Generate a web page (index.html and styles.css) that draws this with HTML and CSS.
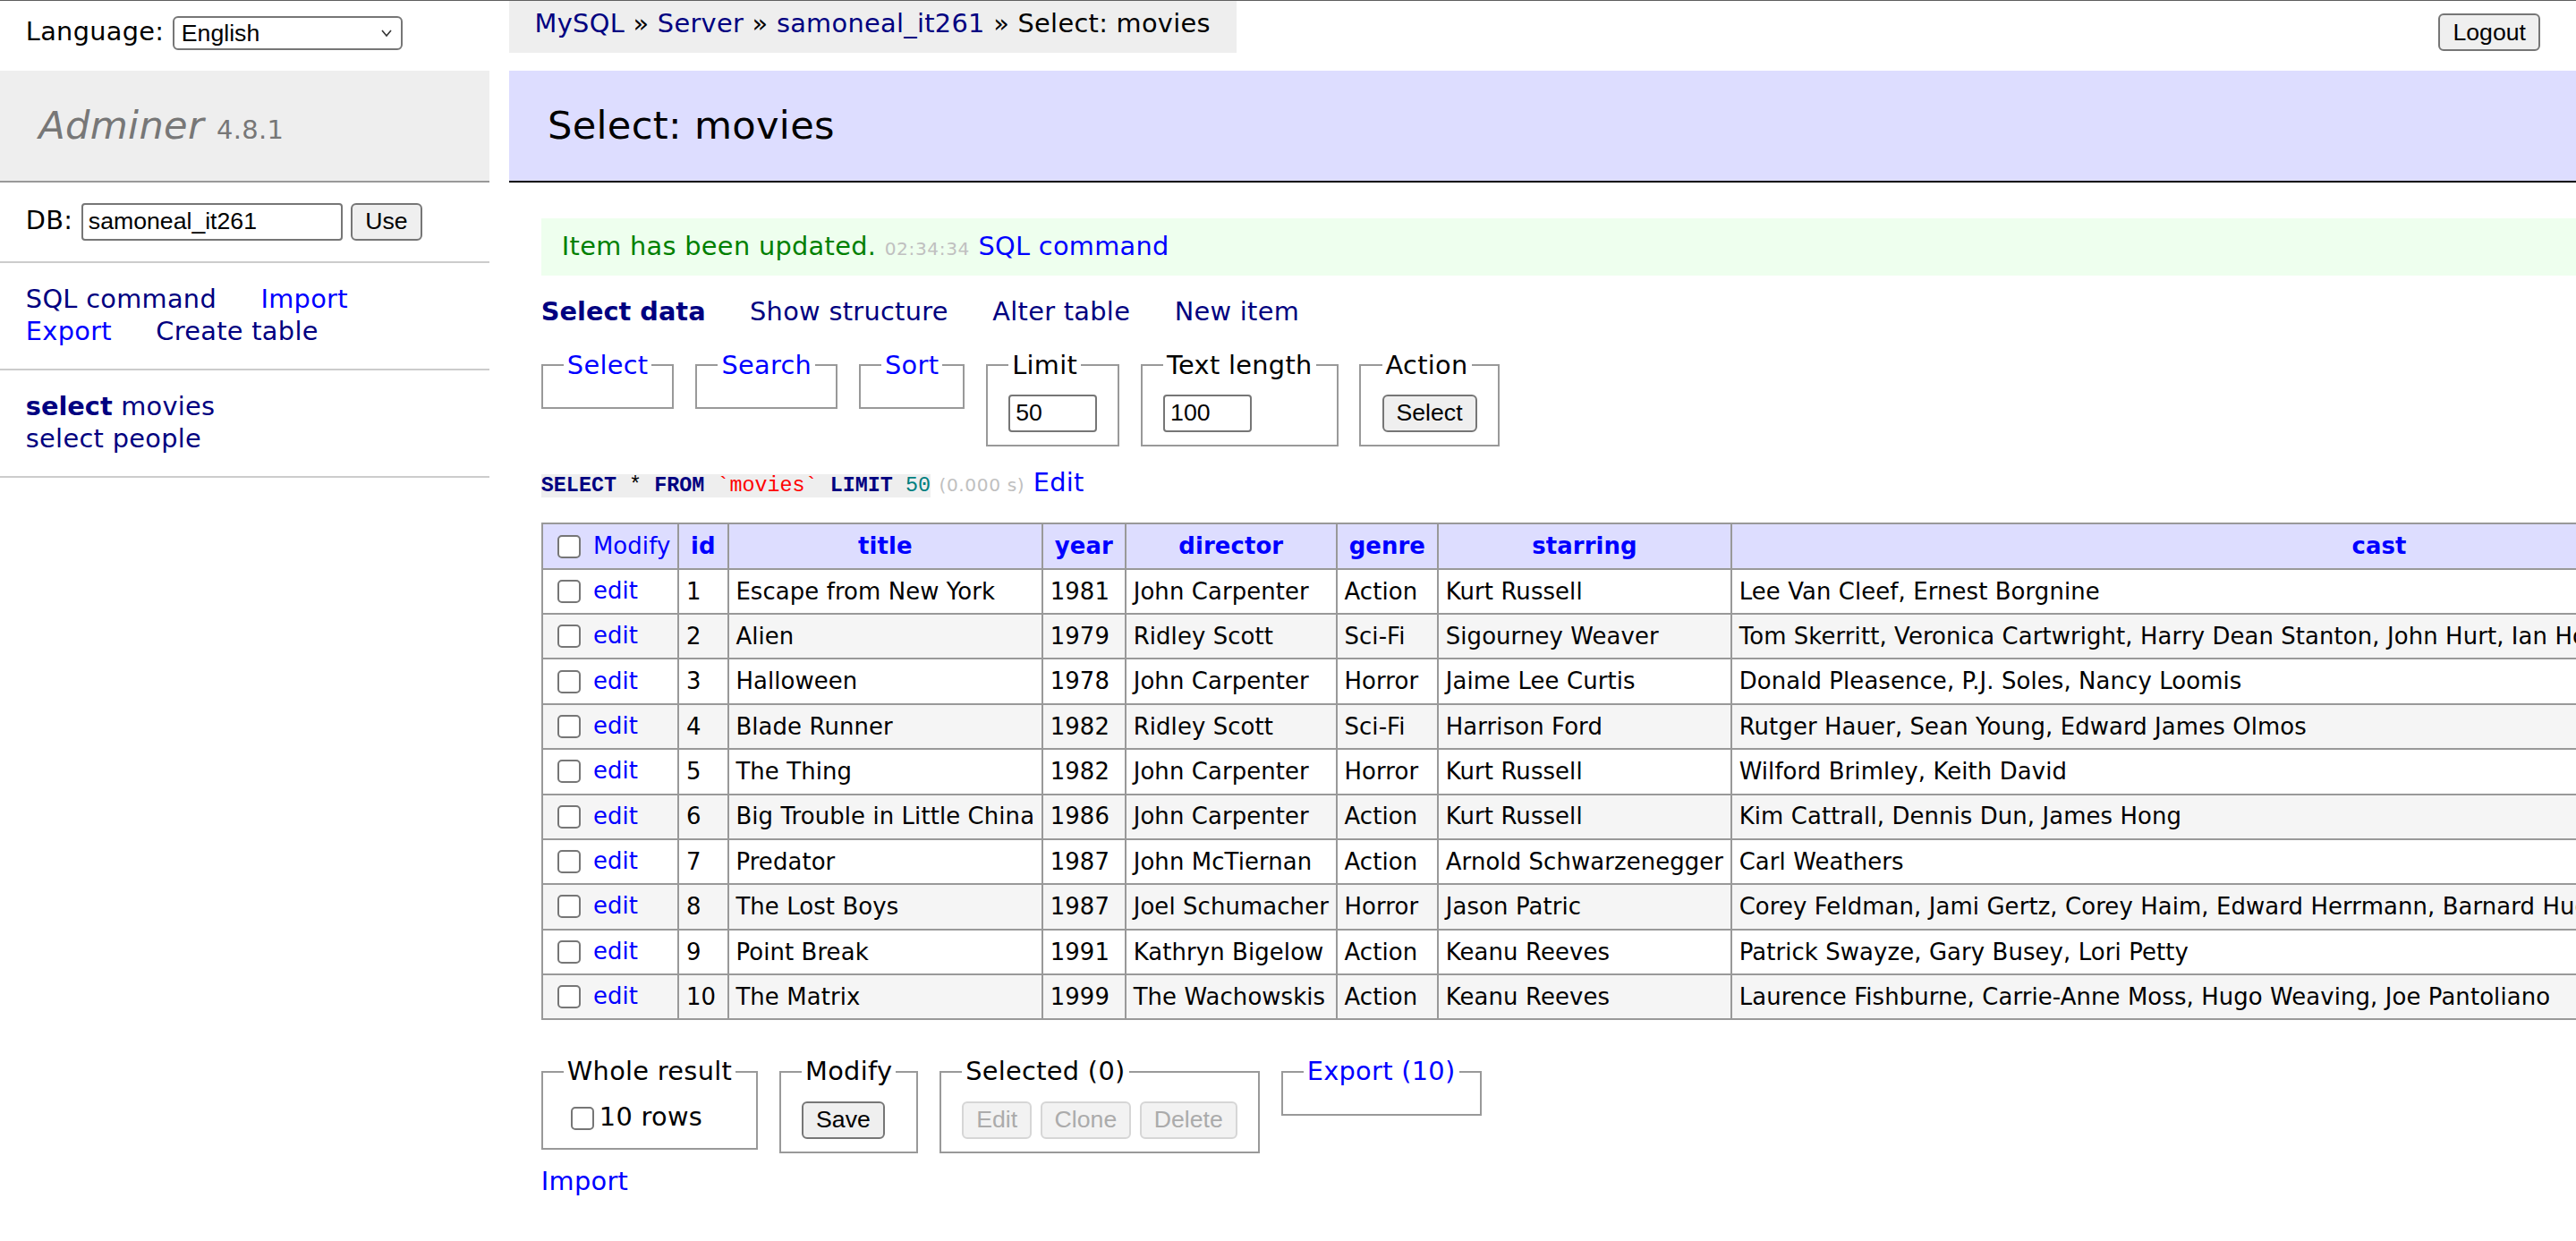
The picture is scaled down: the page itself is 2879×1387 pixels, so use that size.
FILE: index.html
```html
<!DOCTYPE html>
<html lang="en">
<head>
<meta charset="utf-8">
<title>Select: movies - Adminer</title>
<link rel="stylesheet" href="styles.css">
</head>
<body>
<div class="topbar">
  <form class="lang">Language: <span class="select-wrap"><select class="lang-select"><option>English</option></select><svg class="chevron" width="12" height="10" viewBox="0 0 12 10"><path d="M1 2 L6 8 L11 2" fill="none" stroke="#333" stroke-width="1.6"/></svg></span></form>
  <p class="breadcrumb"><a class="v" href="#">MySQL</a> » <a class="v" href="#">Server</a> » <a class="v" href="#">samoneal_it261</a> » Select: movies</p>
  <form class="logout"><button class="btn" type="button">Logout</button></form>
</div>
<div class="main">
  <div class="menu">
    <h1 class="logo"><a class="brand" href="#">Adminer</a> <span class="version">4.8.1</span></h1>
    <p class="dbs">DB: <input class="field db-input" value="samoneal_it261"> <button class="btn" type="button">Use</button></p>
    <p class="side-links"><a class="v" href="#">SQL command</a> <a href="#">Import</a> <a href="#">Export</a> <a class="v" href="#">Create table</a></p>
    <ul class="tables">
      <li><a class="v active" href="#">select</a> <a class="v" href="#">movies</a></li>
      <li><a class="v" href="#">select</a> <a class="v" href="#">people</a></li>
    </ul>
  </div>
  <div class="content">
    <h2 class="title">Select: movies</h2>
    <div class="message">Item has been updated. <span class="time">02:34:34</span> <a href="#">SQL command</a></div>
    <p class="links"><a class="v active" href="#">Select data</a> <a class="v" href="#">Show structure</a> <a class="v" href="#">Alter table</a> <a class="v" href="#">New item</a></p>
    <form class="select-form">
      <fieldset class="box"><legend><a href="#">Select</a></legend></fieldset>
      <fieldset class="box"><legend><a href="#">Search</a></legend></fieldset>
      <fieldset class="box"><legend><a href="#">Sort</a></legend></fieldset>
      <fieldset class="box"><legend>Limit</legend><div><input class="field size" value="50"></div></fieldset>
      <fieldset class="box"><legend>Text length</legend><div><input class="field size" value="100"></div></fieldset>
      <fieldset class="box"><legend>Action</legend><div><button class="btn" type="button">Select</button></div></fieldset>
    </form>
    <p class="sql"><code class="code"><a class="kw" href="#">SELECT</a> * <a class="kw" href="#">FROM</a> <span class="back">`movies`</span> <a class="kw" href="#">LIMIT</a> <span class="num">50</span></code> <span class="time">(0.000 s)</span> <a href="#">Edit</a></p>
    <table class="data">
      <thead>
        <tr><td><input type="checkbox" class="check"> <a href="#">Modify</a></td><th><a href="#">id</a></th><th><a href="#">title</a></th><th><a href="#">year</a></th><th><a href="#">director</a></th><th><a href="#">genre</a></th><th><a href="#">starring</a></th><th><a href="#">cast</a></th></tr>
      </thead>
      <tbody>
        <tr><td><input type="checkbox" class="check"> <a href="#">edit</a></td><td>1</td><td>Escape from New York</td><td>1981</td><td>John Carpenter</td><td>Action</td><td>Kurt Russell</td><td>Lee Van Cleef, Ernest Borgnine</td></tr>
        <tr><td><input type="checkbox" class="check"> <a href="#">edit</a></td><td>2</td><td>Alien</td><td>1979</td><td>Ridley Scott</td><td>Sci-Fi</td><td>Sigourney Weaver</td><td>Tom Skerritt, Veronica Cartwright, Harry Dean Stanton, John Hurt, Ian Holm, Yaphet Kotto</td></tr>
        <tr><td><input type="checkbox" class="check"> <a href="#">edit</a></td><td>3</td><td>Halloween</td><td>1978</td><td>John Carpenter</td><td>Horror</td><td>Jaime Lee Curtis</td><td>Donald Pleasence, P.J. Soles, Nancy Loomis</td></tr>
        <tr><td><input type="checkbox" class="check"> <a href="#">edit</a></td><td>4</td><td>Blade Runner</td><td>1982</td><td>Ridley Scott</td><td>Sci-Fi</td><td>Harrison Ford</td><td>Rutger Hauer, Sean Young, Edward James Olmos</td></tr>
        <tr><td><input type="checkbox" class="check"> <a href="#">edit</a></td><td>5</td><td>The Thing</td><td>1982</td><td>John Carpenter</td><td>Horror</td><td>Kurt Russell</td><td>Wilford Brimley, Keith David</td></tr>
        <tr><td><input type="checkbox" class="check"> <a href="#">edit</a></td><td>6</td><td>Big Trouble in Little China</td><td>1986</td><td>John Carpenter</td><td>Action</td><td>Kurt Russell</td><td>Kim Cattrall, Dennis Dun, James Hong</td></tr>
        <tr><td><input type="checkbox" class="check"> <a href="#">edit</a></td><td>7</td><td>Predator</td><td>1987</td><td>John McTiernan</td><td>Action</td><td>Arnold Schwarzenegger</td><td>Carl Weathers</td></tr>
        <tr><td><input type="checkbox" class="check"> <a href="#">edit</a></td><td>8</td><td>The Lost Boys</td><td>1987</td><td>Joel Schumacher</td><td>Horror</td><td>Jason Patric</td><td>Corey Feldman, Jami Gertz, Corey Haim, Edward Herrmann, Barnard Hughes, Dianne Wiest, Kiefer Sutherland</td></tr>
        <tr><td><input type="checkbox" class="check"> <a href="#">edit</a></td><td>9</td><td>Point Break</td><td>1991</td><td>Kathryn Bigelow</td><td>Action</td><td>Keanu Reeves</td><td>Patrick Swayze, Gary Busey, Lori Petty</td></tr>
        <tr><td><input type="checkbox" class="check"> <a href="#">edit</a></td><td>10</td><td>The Matrix</td><td>1999</td><td>The Wachowskis</td><td>Action</td><td>Keanu Reeves</td><td>Laurence Fishburne, Carrie-Anne Moss, Hugo Weaving, Joe Pantoliano</td></tr>
      </tbody>
    </table>
    <div class="footer">
      <div class="footer-inner">
        <fieldset class="box"><legend>Whole result</legend><label><input type="checkbox" class="check">10 rows</label></fieldset>
        <fieldset class="box"><legend>Modify</legend><div><button class="btn" type="button">Save</button></div></fieldset>
        <fieldset class="box"><legend>Selected (0)</legend><div><button class="btn" type="button" disabled>Edit</button> <button class="btn" type="button" disabled>Clone</button> <button class="btn" type="button" disabled>Delete</button></div></fieldset>
        <fieldset class="box"><legend><a href="#">Export (10)</a></legend></fieldset>
      </div>
    </div>
    <div class="import"><a href="#">Import</a></div>
  </div>
</div>
</body>
</html>
```

FILE: styles.css
```css
html {
  overflow: hidden;
}
body {
  margin: 0;
  color: #000;
  background: #fff;
  font: 28.8px/1.25 "DejaVu Sans", Verdana, sans-serif;
  letter-spacing: 0.3px;
  width: fit-content;
  min-width: 100vw;
  border-top: 1px solid #5f5f5f;
}
a {
  color: blue;
  text-decoration: none;
}
a.v {
  color: navy;
}
.active {
  font-weight: bold;
  letter-spacing: 0;
}

/* top bar */
.topbar {
  display: flex;
  align-items: flex-start;
  width: 100vw;
  height: 57.6px;
}
.lang {
  flex: none;
  width: 568.8px;
  box-sizing: border-box;
  margin: 0;
  padding: .3em 1em;
  line-height: 1.8em;
  white-space: nowrap;
}
.select-wrap {
  position: relative;
  display: inline-block;
  vertical-align: middle;
}
.lang-select {
  appearance: none;
  -webkit-appearance: none;
  width: 257px;
  height: 38px;
  box-sizing: border-box;
  border: 2px solid #767676;
  border-radius: 6px;
  background: #fff;
  color: #000;
  padding: 0 30px 0 8px;
  font: 26.67px "Liberation Sans", Arial, sans-serif;
  display: block;
}
.chevron {
  position: absolute;
  right: 12px;
  top: 14px;
  pointer-events: none;
}
.breadcrumb {
  margin: 0;
  background: #eee;
  height: 2em;
  line-height: 1.8em;
  padding: 0 1em;
  white-space: nowrap;
}
.logout {
  margin: 14.4px 40px 0 auto;
}

/* form controls */
.field {
  font: 26.67px "Liberation Sans", Arial, sans-serif;
  color: #000;
  background: #fff;
  border: 2px solid #767676;
  border-radius: 4px;
  padding: 2px 6px;
  height: 42px;
  box-sizing: border-box;
  vertical-align: middle;
}
.db-input {
  width: 292px;
}
.size {
  width: 99px;
}
.btn {
  font: 26.67px "Liberation Sans", Arial, sans-serif;
  color: #000;
  background: #efefef;
  border: 2px solid #767676;
  border-radius: 6px;
  padding: 0 14px;
  height: 42px;
  vertical-align: middle;
}
.btn:disabled {
  color: #ababab;
  background: #f2f2f2;
  border-color: #d6d6d6;
}
.check {
  appearance: none;
  -webkit-appearance: none;
  width: 26px;
  height: 26px;
  box-sizing: border-box;
  border: 2px solid #767676;
  border-radius: 5px;
  background: #fff;
  margin: 6px 6px 6px 8px;
  vertical-align: middle;
}

/* layout */
.main {
  display: flex;
  align-items: flex-start;
  margin-top: 20px;
}
.menu {
  flex: none;
  width: 19em;
}
.content {
  flex: none;
  margin-left: 2em;
  padding: 0 40px 40px 0;
}

/* menu */
.logo {
  font-size: 150%;
  margin: 0;
  padding: .8em 1em;
  border-bottom: 2px solid #999;
  font-weight: normal;
  color: #777;
  background: #eee;
}
.brand {
  color: #777;
  font-style: italic;
}
.version {
  color: #777;
  font-size: 67%;
}
.dbs,
.side-links,
.tables {
  margin: 0;
  padding: .8em 1em;
  border-bottom: 2px solid #ccc;
}
.side-links a {
  white-space: nowrap;
  margin-right: 40px;
}
.tables {
  white-space: nowrap;
}
.tables li {
  list-style: none;
}

/* content */
.title {
  font-size: 150%;
  margin: 0 0 40px -36px;
  padding: .8em 1em;
  border-bottom: 2px solid #000;
  color: #000;
  font-weight: normal;
  background: #ddf;
}
.message {
  color: green;
  background: #efe;
  padding: .5em .8em;
  margin: 1em 40px 0 0;
}
.time {
  color: silver;
  font-size: 70%;
  letter-spacing: 0.6px;
}
.links,
.sql {
  margin: .8em 40px 0 0;
}
.links a {
  white-space: nowrap;
  margin-right: 40px;
}
.select-form {
  margin: 0;
}
.box {
  display: inline-block;
  vertical-align: top;
  padding: .5em .8em;
  margin: .8em .5em 0 0;
  border: 2px solid #999;
  min-width: 0;
}
.box legend {
  padding: 0 4px;
}
.code {
  font: 23.4px/1.25 "Liberation Mono", "Courier New", monospace;
  letter-spacing: 0;
  background: #eee;
}
.code .kw {
  color: navy;
  font-weight: bold;
}
.back {
  color: red;
}
.num {
  color: #007f7f;
}

/* table */
.data {
  margin: 1em 40px 0 0;
  border-collapse: collapse;
  font-size: 90%;
  letter-spacing: 0.1px;
}
.data td,
.data th {
  border: 2px solid #999;
  padding: .2em .3em;
  white-space: pre;
  text-align: left;
}
.data thead th {
  text-align: center;
  padding: .2em .5em;
}
.data thead td,
.data thead th {
  background: #ddf;
}
.data tbody tr:nth-child(2n) {
  background: #f5f5f5;
}

/* footer */
.footer {
  margin-top: 40px;
}
.footer-inner {
  padding: 0 0 .5em;
}
.footer .box {
  margin-top: 0;
}
.footer label {
  white-space: nowrap;
}
```
